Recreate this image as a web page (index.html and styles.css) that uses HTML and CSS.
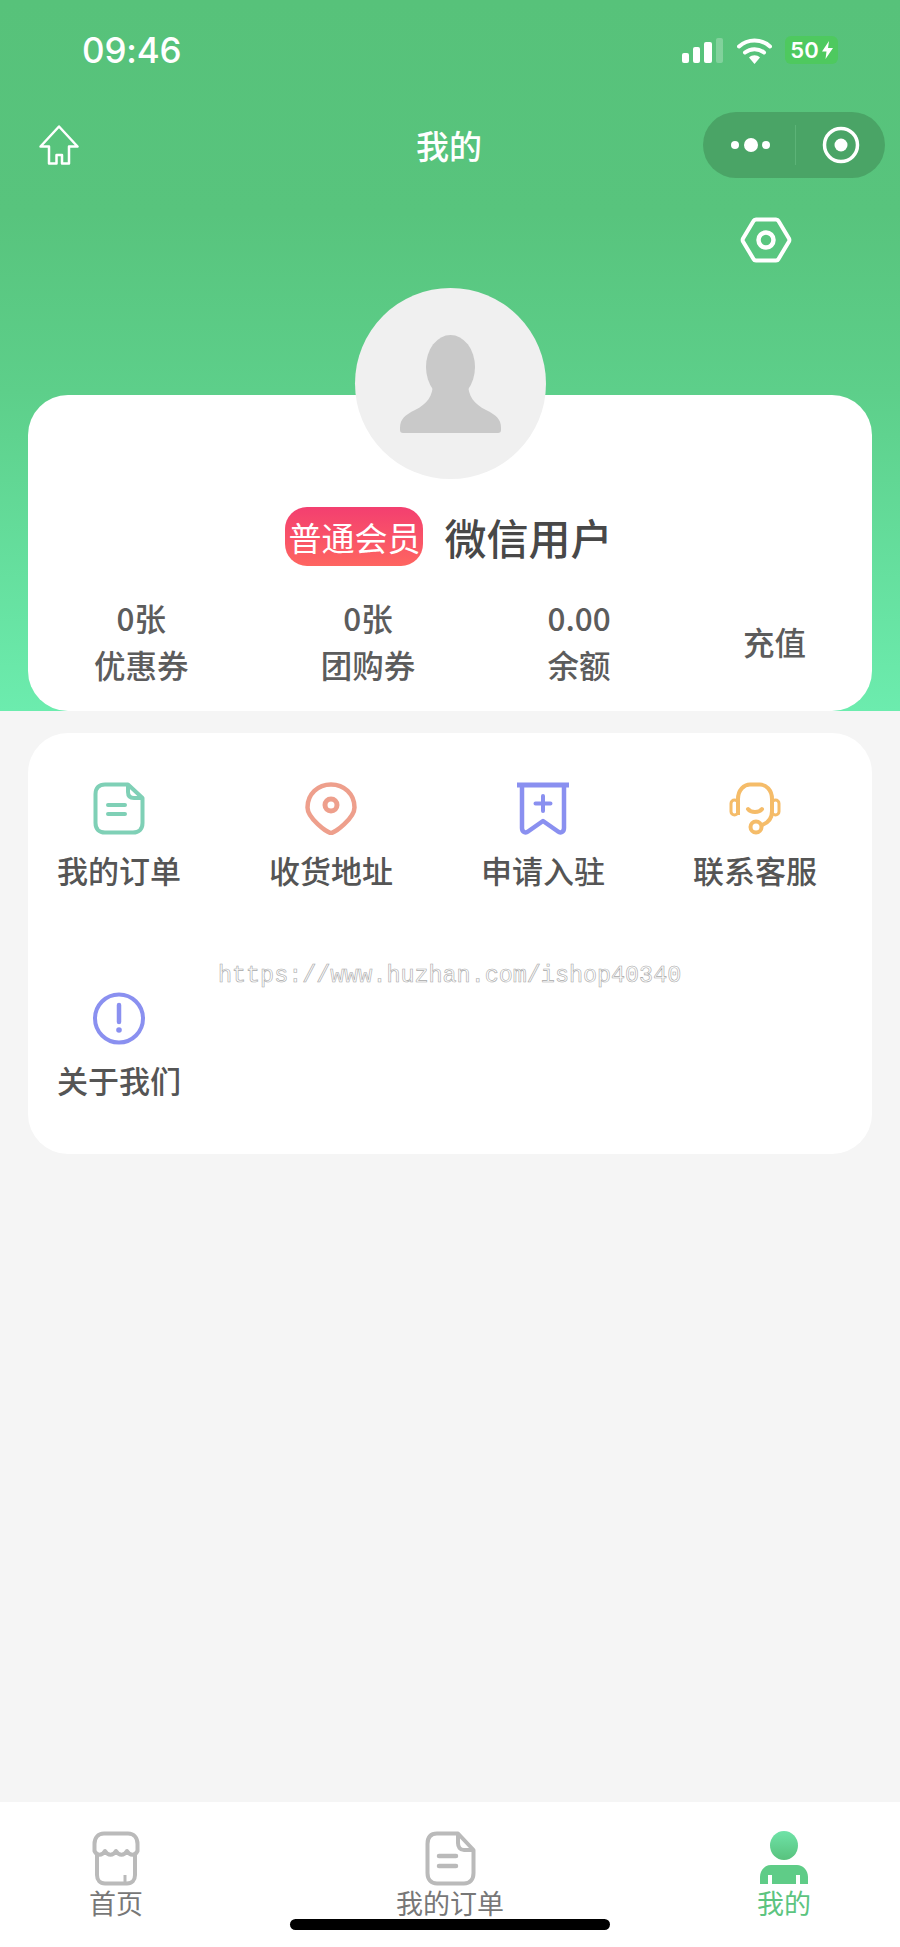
FILE: index.html
```html
<!DOCTYPE html>
<html lang="zh-CN">
<head>
    <meta charset="UTF-8">
    <meta name="viewport" content="width=device-width, initial-scale=1.0">
    <title>我的</title>
    <link rel="stylesheet" href="styles.css">
</head>
<body>
    <div class="page">
        <div class="top">
            <div class="status-bar">
                <span class="time">09:46</span>
                <div class="status-icons">
                    <svg class="signal" width="41" height="25" viewBox="0 0 41 25">
                        <rect x="0" y="15" width="7" height="10" rx="2" fill="#fff"/>
                        <rect x="11" y="9" width="7" height="16" rx="2" fill="#fff"/>
                        <rect x="22" y="4" width="8" height="21" rx="2" fill="#fff"/>
                        <rect x="34" y="0" width="7" height="25" rx="2" fill="#fff" opacity="0.25"/>
                    </svg>
                    <svg class="wifi" width="35" height="27" viewBox="0 0 35 27">
                        <path d="M2 9.500C11 1.500 24 1.500 33 9.500" fill="none" stroke="#fff" stroke-width="4" stroke-linecap="round"/>
                        <path d="M8 15.500C13.500 11 21.500 11 27 15.500" fill="none" stroke="#fff" stroke-width="4" stroke-linecap="round"/>
                        <path d="M12 20.500C15 17.500 20 17.500 23 20.500L17.500 27Z" fill="#fff"/>
                    </svg>
                    <div class="battery">
                        <span>50</span>
                        <svg width="11" height="18" viewBox="0 0 11 18"><path d="M7 0L0 10.500H4.500L3.500 18L11 7H6Z" fill="#fff"/></svg>
                    </div>
                </div>
            </div>

            <div class="nav-bar">
                <svg class="nav-home" width="40" height="40" viewBox="0 0 40 40">
                    <path d="M20 1.500L38.500 21.500H30V38.500H23V30H17.500V38.500H10V21.500H1.500Z" fill="none" stroke="#fff" stroke-width="2.500" stroke-linejoin="round"/>
                </svg>
                <span class="nav-title">我的</span>
                <div class="capsule">
                    <svg width="92" height="66" viewBox="0 0 92 66">
                        <circle cx="32" cy="33" r="4" fill="#fff"/>
                        <circle cx="48" cy="33" r="7" fill="#fff"/>
                        <circle cx="63" cy="33" r="4" fill="#fff"/>
                    </svg>
                    <span class="capsule-line"></span>
                    <svg width="89" height="66" viewBox="0 0 89 66">
                        <circle cx="45" cy="33" r="16.500" fill="none" stroke="#fff" stroke-width="3.500"/>
                        <circle cx="45" cy="33" r="6.500" fill="#fff"/>
                    </svg>
                </div>
            </div>

            <div class="settings-row">
                <svg width="52" height="46" viewBox="0 0 52 46">
                    <path d="M16 2.500H36C37 2.500 38 3 38.500 4L49 21.500C49.500 22.500 49.500 23.500 49 24.500L38.500 42C38 43 37 43.500 36 43.500H16C15 43.500 14 43 13.500 42L3 24.500C2.500 23.500 2.500 22.500 3 21.500L13.500 4C14 3 15 2.500 16 2.500Z" fill="none" stroke="#fff" stroke-width="4" stroke-linejoin="round"/>
                    <circle cx="26" cy="23" r="7.500" fill="none" stroke="#fff" stroke-width="4.500"/>
                </svg>
            </div>

            <div class="user-card">
                <div class="avatar">
                    <svg width="191" height="191" viewBox="0 0 191 191">
                        <ellipse cx="95.500" cy="79" rx="24.500" ry="32" fill="#c9c9c9"/>
                        <path d="M78 95C78 108 72 116 60 122C50 127 45 131 45 140V142Q45 145 48 145H143Q146 145 146 142V140C146 131 141 127 131 122C119 116 113 108 113 95Z" fill="#c9c9c9"/>
                    </svg>
                </div>
                <div class="user-name-row">
                    <span class="member-badge">普通会员</span>
                    <span class="user-name">微信用户</span>
                </div>
                <div class="stats">
                    <div class="stat"><span>0张</span><span>优惠券</span></div>
                    <div class="stat"><span>0张</span><span>团购券</span></div>
                    <div class="stat"><span>0.00</span><span>余额</span></div>
                    <div class="stat"><span>充值</span></div>
                </div>
            </div>
        </div>

        <div class="menu-card">
            <div class="menu-item">
                <svg width="52" height="53" viewBox="0 0 52 53">
                    <path d="M12 2.500H35L49.500 16V41C49.500 47 46 50.500 40 50.500H12C6 50.500 2.500 47 2.500 41V12C2.500 6 6 2.500 12 2.500Z" fill="none" stroke="#7fd0b6" stroke-width="4" stroke-linejoin="round"/>
                    <path d="M35 3V10C35 14 37 16 41 16H49" fill="none" stroke="#7fd0b6" stroke-width="4"/>
                    <path d="M15 23H32M15 32H32" stroke="#7fd0b6" stroke-width="4" stroke-linecap="round"/>
                </svg>
                <span>我的订单</span>
            </div>
            <div class="menu-item">
                <svg width="52" height="53" viewBox="0 0 52 53">
                    <path d="M26 51C22 51 2.500 36 2.500 25.500C2.500 12 13 2.500 26 2.500C39 2.500 49.500 12 49.500 25.500C49.500 36 30 51 26 51Z" fill="none" stroke="#ee9f8c" stroke-width="4.500" stroke-linejoin="round"/>
                    <circle cx="26" cy="23" r="6" fill="none" stroke="#ee9f8c" stroke-width="5"/>
                </svg>
                <span>收货地址</span>
            </div>
            <div class="menu-item">
                <svg width="52" height="53" viewBox="0 0 52 53">
                    <path d="M0 3H52" stroke="#8a90f0" stroke-width="5"/>
                    <path d="M5 3V46C5 50 8.500 51.500 11 49.500L26 39L41 49.500C43.500 51.500 47 50 47 46V3" fill="none" stroke="#8a90f0" stroke-width="4.500" stroke-linejoin="round"/>
                    <path d="M26 14V29M18.500 21.500H33.500" stroke="#8a90f0" stroke-width="4" stroke-linecap="round"/>
                </svg>
                <span>申请入驻</span>
            </div>
            <div class="menu-item">
                <svg width="52" height="53" viewBox="0 0 52 53">
                    <path d="M9 17C9 8 15 2.500 21 2.500H31C37 2.500 43 8 43 17V29C43 36 39 41 33 43" fill="none" stroke="#f5bc69" stroke-width="4" stroke-linecap="round"/>
                    <path d="M9 17V33" stroke="#f5bc69" stroke-width="4"/>
                    <rect x="2" y="18" width="7" height="15" rx="3.500" fill="none" stroke="#f5bc69" stroke-width="3"/>
                    <rect x="43" y="18" width="7" height="15" rx="3.500" fill="none" stroke="#f5bc69" stroke-width="3"/>
                    <path d="M19 27C22 31 30 31 33 27" fill="none" stroke="#f5bc69" stroke-width="4" stroke-linecap="round"/>
                    <circle cx="27" cy="45" r="5.500" fill="none" stroke="#f5bc69" stroke-width="4"/>
                </svg>
                <span>联系客服</span>
            </div>
            <div class="menu-item">
                <svg width="52" height="53" viewBox="0 0 52 53">
                    <circle cx="26" cy="26.500" r="24" fill="none" stroke="#8a90f0" stroke-width="4"/>
                    <path d="M26 13V30" stroke="#8a90f0" stroke-width="4.500" stroke-linecap="round"/>
                    <circle cx="26" cy="38" r="2.800" fill="#8a90f0"/>
                </svg>
                <span>关于我们</span>
            </div>
            <div class="watermark">https://www.huzhan.com/ishop40340</div>
        </div>

        <div class="tab-bar">
            <div class="tab">
                <svg width="48" height="55" viewBox="0 0 48 55">
                    <path d="M12 2.500H36C42 2.500 45.500 7 45.500 13V20C43 25 38 25 35 20C32 25 27 25 24 20C21 25 16 25 13 20C10 25 5 25 2.500 20V13C2.500 7 6 2.500 12 2.500Z" fill="none" stroke="#bababa" stroke-width="4" stroke-linejoin="round"/>
                    <path d="M5 22V44C5 49 8 52.500 13 52.500H35C40 52.500 43 49 43 44V22" fill="none" stroke="#bababa" stroke-width="4"/>
                    <path d="M33 44V52" stroke="#bababa" stroke-width="3"/>
                </svg>
                <span>首页</span>
            </div>
            <div class="tab">
                <svg width="51" height="55" viewBox="0 0 51 55">
                    <path d="M12 2.500H33L48.500 19V42C48.500 48.500 45 52.500 39 52.500H12C6 52.500 2.500 48.500 2.500 42V13C2.500 6 6 2.500 12 2.500Z" fill="none" stroke="#bababa" stroke-width="4" stroke-linejoin="round"/>
                    <path d="M33 3V12C33 16 35 19 39 19H48" fill="none" stroke="#bababa" stroke-width="4"/>
                    <path d="M14 25H31M14 35H31" stroke="#bababa" stroke-width="4.500" stroke-linecap="round"/>
                </svg>
                <span>我的订单</span>
            </div>
            <div class="tab active">
                <svg width="50" height="55" viewBox="0 0 50 55">
                    <defs>
                        <linearGradient id="personFill" x1="0" y1="0" x2="0" y2="1">
                            <stop offset="0" stop-color="#6fe3a8"/>
                            <stop offset="1" stop-color="#58c27d"/>
                        </linearGradient>
                    </defs>
                    <ellipse cx="25" cy="14.500" rx="14" ry="14.500" fill="url(#personFill)"/>
                    <path d="M12 34H38C44 34 49 39 49 46V53H41V44H37V53H13V44H9V53H1V46C1 39 6 34 12 34Z" fill="#5fcc87"/>
                </svg>
                <span>我的</span>
            </div>
            <div class="home-indicator"></div>
        </div>
    </div>
</body>
</html>
```
FILE: styles.css
```css
* {
    box-sizing: border-box;
}

body {
    margin: 0;
    font-family: "Noto Sans CJK SC", "Liberation Sans", sans-serif;
    color: #555;
}

.page {
    width: 900px;
    height: 1947px;
    display: flex;
    flex-direction: column;
    background-color: #f5f5f5;
    overflow: hidden;
}

.top {
    height: 711px;
    background: linear-gradient(180deg, #57c27a 0%, #58c47d 30%, #5dcf8a 55%, #6cecae 100%);
}

.status-bar {
    height: 100px;
    padding: 0 62px 0 82px;
    display: flex;
    justify-content: space-between;
    align-items: center;
}

.time {
    font-family: Inter, "Liberation Sans", sans-serif;
    font-size: 35px;
    font-weight: 500;
    letter-spacing: -0.2px;
    color: #fff;
}

.status-icons {
    display: flex;
    align-items: center;
}

.signal {
    margin-right: 14px;
}

.wifi {
    margin-right: 13px;
}

.battery {
    width: 53px;
    height: 28px;
    display: flex;
    justify-content: center;
    align-items: center;
    gap: 3px;
    border-radius: 6px;
    background-color: #4ec95f;
    font-family: Inter, "Liberation Sans", sans-serif;
    font-size: 22px;
    font-weight: 600;
    color: #fff;
}

.nav-bar {
    height: 90px;
    padding: 0 15px 0 39px;
    display: flex;
    justify-content: space-between;
    align-items: center;
}

.nav-title {
    width: 66px;
    margin-left: 116px;
    font-size: 33px;
    font-weight: 500;
    line-height: 1;
    color: #fff;
}

.capsule {
    width: 182px;
    height: 66px;
    display: flex;
    align-items: center;
    border-radius: 33px;
    background-color: #4aa466;
}

.capsule-line {
    width: 1px;
    height: 40px;
    background-color: #5cb377;
}

.settings-row {
    height: 46px;
    margin-top: 27px;
    padding-right: 108px;
    display: flex;
    justify-content: flex-end;
}

.user-card {
    display: flow-root;
    height: 316px;
    margin: 132px 28px 0;
    border-radius: 40px;
    background-color: #fff;
}

.avatar {
    width: 191px;
    height: 191px;
    margin: -107px auto 0;
    border-radius: 50%;
    background-color: #f0f0f0;
}

.user-name-row {
    height: 59px;
    margin-top: 28px;
    padding-right: 2px;
    display: flex;
    justify-content: center;
    align-items: center;
    gap: 21px;
}

.member-badge {
    width: 138px;
    height: 59px;
    display: flex;
    justify-content: center;
    align-items: center;
    border-radius: 22px;
    background: linear-gradient(180deg, #f33f70, #fe6560);
    font-size: 33px;
    white-space: nowrap;
    color: #fff;
}

.user-name {
    font-size: 42px;
    font-weight: 500;
    line-height: 1;
    color: #484848;
}

.stats {
    margin-top: 28px;
    display: flex;
    justify-content: space-around;
    align-items: center;
}

.stat {
    display: flex;
    flex-direction: column;
    align-items: center;
    font-size: 31.5px;
    font-weight: 500;
    line-height: 47px;
    color: #5c5c5c;
}

.menu-card {
    height: 421px;
    margin: 22px 28px 0;
    padding: 49px 0 0 29px;
    position: relative;
    display: grid;
    grid-template-columns: repeat(4, 212px);
    grid-auto-rows: 112px;
    row-gap: 98px;
    border-radius: 40px;
    background-color: #fff;
}

.menu-item {
    width: 124px;
    display: flex;
    flex-direction: column;
    align-items: center;
    gap: 12px;
    font-size: 31px;
    font-weight: 500;
    line-height: 45px;
    white-space: nowrap;
}

.watermark {
    position: absolute;
    left: 190px;
    top: 229px;
    font-family: "Liberation Mono", monospace;
    font-size: 23.4px;
    line-height: 28px;
    white-space: nowrap;
    color: #fff;
    -webkit-text-stroke: 0.6px #a8a8a8;
}

.tab-bar {
    height: 145px;
    margin-top: auto;
    padding: 29px 89px 0;
    position: relative;
    display: flex;
    justify-content: space-between;
    background-color: #fff;
}

.tab {
    display: flex;
    flex-direction: column;
    align-items: center;
    font-size: 27px;
    line-height: 34px;
    color: #777;
}

.tab.active {
    color: #5cc47f;
}

.home-indicator {
    position: absolute;
    left: 290px;
    bottom: 17px;
    width: 320px;
    height: 11px;
    border-radius: 6px;
    background-color: #000;
}
```
